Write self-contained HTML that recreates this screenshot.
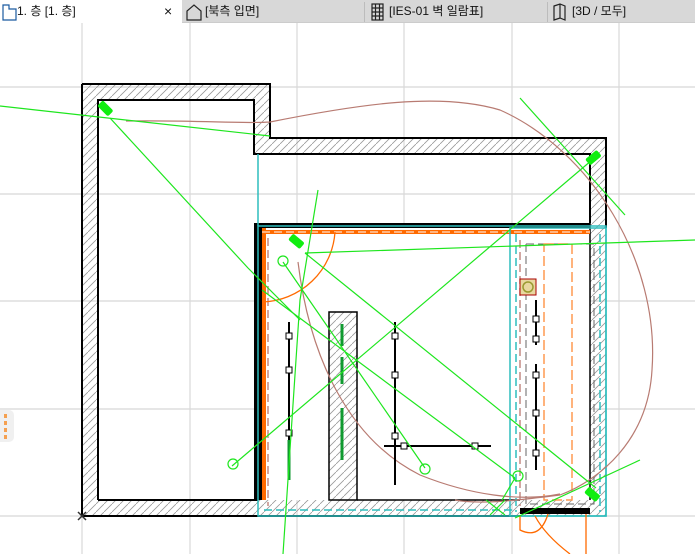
<!DOCTYPE html>
<html><head><meta charset="utf-8"><style>
html,body{margin:0;padding:0;width:695px;height:554px;overflow:hidden;background:#fff;font-family:"Liberation Sans","Noto Sans CJK KR",sans-serif}
.tabs{position:absolute;left:0;top:0;width:695px;height:22px;background:#d8d8d8;border-bottom:1px solid #cccccc}
.tab{position:absolute;top:0;height:22px;font-size:12px;line-height:23px;color:#111;white-space:nowrap}
.sep{position:absolute;top:2px;width:1px;height:20px;background:#bcbcbc}
</style></head><body>
<svg width="695" height="554" style="position:absolute;left:0;top:0">
<defs>
<pattern id="h" patternUnits="userSpaceOnUse" width="8" height="8"><path d="M-2,10 L10,-2" stroke="#999" stroke-width="0.8"/></pattern>
</defs>
<g stroke="#d8d8d8" stroke-width="1.2">
<line x1="82" y1="22" x2="82" y2="554"/><line x1="190" y1="22" x2="190" y2="554"/><line x1="297" y1="22" x2="297" y2="554"/><line x1="404" y1="22" x2="404" y2="554"/><line x1="512" y1="22" x2="512" y2="554"/><line x1="619" y1="22" x2="619" y2="554"/>
<line x1="0" y1="87" x2="695" y2="87"/><line x1="0" y1="194" x2="695" y2="194"/><line x1="0" y1="301" x2="695" y2="301"/><line x1="0" y1="409" x2="695" y2="409"/><line x1="0" y1="516" x2="695" y2="516"/>
</g>
<path d="M82,84 H270 V138 H606 V516 H82 Z M98,100 V500 H254 V223 H590 V154 H254 V100 Z" fill="url(#h)" fill-rule="evenodd"/>
<rect x="254" y="223" width="336" height="277" fill="#fff"/>
<rect x="329" y="312" width="28" height="188" fill="url(#h)" stroke="#000" stroke-width="1.5"/>
<path d="M82,84 H270 V138 H606 V228" fill="none" stroke="#000" stroke-width="2"/>
<path d="M98,500 V100 H254 V154 H590 V223" fill="none" stroke="#000" stroke-width="2"/>
<path d="M82,84 V516 H520" fill="none" stroke="#000" stroke-width="2"/>
<path d="M98,500 H258" fill="none" stroke="#000" stroke-width="2"/>
<path d="M357,500 H520 M590,223 V500" fill="none" stroke="#000" stroke-width="1.5"/>
<line x1="590" y1="228" x2="606" y2="228" stroke="#000" stroke-width="1"/>
<rect x="254" y="223" width="336" height="5" fill="#000"/>
<rect x="254" y="223" width="8" height="277" fill="#000"/>
<rect x="262" y="228" width="4" height="272" fill="#ff6a00"/>
<rect x="262" y="230" width="328" height="4" fill="#ff6a00"/>
<line x1="262" y1="232" x2="590" y2="232" stroke="#fff" stroke-width="1" stroke-dasharray="8,4"/>
<rect x="520" y="508" width="70" height="6" fill="#000"/>
<g fill="none" stroke="#2ebdbd" stroke-width="1.5">
<rect x="258" y="226" width="348" height="290"/>
<path d="M258,154 V226"/>
<rect x="510" y="228" width="96" height="288"/>
<path d="M516,234 V512 M600,234 V512 M264,510 H516" stroke-dasharray="8,4"/>
<path d="M268,238 V506 M520,240 V506" stroke="#c48a84" stroke-dasharray="8,4"/>
<path d="M526,244 V504 H594 V244 H526" stroke="#666" stroke-width="1" stroke-dasharray="8,4"/>
</g>
<rect x="544" y="244" width="28" height="256" fill="none" stroke="#ff9a50" stroke-width="1.5" stroke-dasharray="10,4"/>
<path d="M335,232 A75,75 0 0 1 262,302" fill="none" stroke="#ff6a00" stroke-width="1.3"/>
<path d="M520,516 V530 Q540,540 548,514 M535,516 Q545,535 570,554 M586,514 V554" fill="none" stroke="#ff6a00" stroke-width="1.3"/>
<path d="M126,121 C200,120 240,124 270,122 C360,104 440,92 500,110 C590,150 660,260 652,370 C648,440 600,480 560,495 C520,500 480,505 455,500" fill="none" stroke="#b87b72" stroke-width="1.2"/>
<path d="M298,262 C310,360 350,440 420,475 C470,495 520,502 560,494" fill="none" stroke="#b87b72" stroke-width="1.2"/>
<g stroke="#000" stroke-width="2" fill="#fff">
<line x1="289" y1="322" x2="289" y2="480"/><line x1="395" y1="322" x2="395" y2="485"/><line x1="384" y1="446" x2="491" y2="446"/>
<line x1="536" y1="300" x2="536" y2="345"/><line x1="536" y1="364" x2="536" y2="470"/>
</g>
<g stroke="#000" stroke-width="1" fill="#fff">
<rect x="286" y="333" width="6" height="6"/><rect x="286" y="367" width="6" height="6"/><rect x="286" y="430" width="6" height="6"/>
<rect x="392" y="333" width="6" height="6"/><rect x="392" y="372" width="6" height="6"/><rect x="392" y="433" width="6" height="6"/>
<rect x="401" y="443" width="6" height="6"/><rect x="472" y="443" width="6" height="6"/>
<rect x="533" y="316" width="6" height="6"/><rect x="533" y="336" width="6" height="6"/><rect x="533" y="372" width="6" height="6"/><rect x="533" y="410" width="6" height="6"/><rect x="533" y="450" width="6" height="6"/>
</g>
<rect x="520" y="279" width="16" height="16" fill="#e8d8a0" stroke="#a00" stroke-width="1"/>
<circle cx="528" cy="287" r="5" fill="none" stroke="#9a9a30" stroke-width="1.5"/>
<g stroke="#109a30" stroke-width="3"><line x1="342" y1="324" x2="342" y2="346"/><line x1="342" y1="357" x2="342" y2="384"/><line x1="342" y1="408" x2="342" y2="460"/><line x1="289" y1="440" x2="289" y2="480"/></g>
<g stroke="#1ee61e" stroke-width="1.2" fill="none">
<path d="M0,106 L270,136"/>
<path d="M110,118 L248,268 L300,320"/>
<path d="M232,466 L592,160"/>
<path d="M305,253 L695,240"/>
<path d="M520,98 L625,215"/>
<path d="M305,253 L596,488"/>
<path d="M283,262 L425,468"/>
<path d="M262,290 L515,478"/>
<path d="M515,518 L640,460"/>
<path d="M318,190 L300,300 L283,554"/>
<path d="M515,478 L502,500"/>
<path d="M486,500 L505,515 M490,515 L505,500"/>
<circle cx="283" cy="261" r="5"/><circle cx="425" cy="469" r="5"/><circle cx="233" cy="464" r="5"/><circle cx="518" cy="476" r="5"/>
</g>
<g fill="#10ee10">
<rect x="98" y="104" width="15" height="8" rx="2" transform="rotate(45 105 108)"/>
<rect x="289" y="237" width="15" height="8" rx="2" transform="rotate(40 296 241)"/>
<rect x="586" y="154" width="15" height="8" rx="2" transform="rotate(-40 593 158)"/>
<rect x="585" y="490" width="15" height="8" rx="2" transform="rotate(40 592 494)"/>
</g>
<path d="M78,512 L86,520 M86,512 L78,520" stroke="#333" stroke-width="1.5"/>
</svg>
<div style="position:absolute;left:0;top:410px;width:14px;height:32px;background:#f0f0f0;border-radius:0 5px 5px 0"></div>
<div style="position:absolute;left:4px;top:414px;width:3px;height:26px;background:repeating-linear-gradient(#f5a050 0 4px,transparent 4px 7px)"></div>
<div class="tabs">
<div class="tab" style="left:0;width:182px;background:#fff;height:23px"></div>
<svg width="695" height="22" style="position:absolute;left:0;top:0">
<path d="M3,5 H9 V9 H16 V20 H3 Z" fill="none" stroke="#1a5aa0" stroke-width="1.2"/>
<path d="M187,20 V11 L194,5 L201,11 V20 Z" fill="none" stroke="#222" stroke-width="1.2"/>
<g fill="none" stroke="#222" stroke-width="1.2"><rect x="372" y="4" width="11" height="16"/><path d="M375.5,4 V20 M379.5,4 V20 M372,8 H383 M372,12 H383 M372,16 H383"/></g>
<path d="M554,6 L560,4 L565,6 V20 L560,18 L554,20 Z M560,4 V18" fill="none" stroke="#222" stroke-width="1.2"/>
</svg>
<div class="tab" style="left:17px">1. 층 [1. 층]</div>
<div class="tab" style="left:164px;font-size:14px">×</div>
<div class="tab" style="left:205px">[북측 입면]</div>
<div class="tab" style="left:389px">[IES-01 벽 일람표]</div>
<div class="tab" style="left:572px">[3D / 모두]</div>
<div class="sep" style="left:364px"></div><div class="sep" style="left:547px"></div>
</div>
</body></html>
